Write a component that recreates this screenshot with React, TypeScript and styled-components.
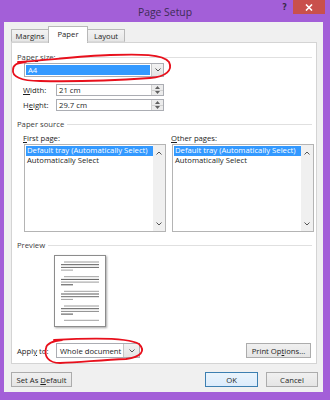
import styled, { createGlobalStyle } from 'styled-components';

// -----------------------------------------------------------------------------

const GlobalStyle = createGlobalStyle`
	body {
		margin: 0;
		font-family: "Open Sans", "Noto Sans", sans-serif;
		font-size: 7.7px;
		color: #1e1e1e;
	}
`;

const pageLines = [
	{ y: 7, x1: 10, x2: 45, c: '#9a9a9a' },
	{ y: 9.7, x1: 7, x2: 45, c: '#5a5a5a' },
	{ y: 12.4, x1: 7, x2: 45, c: '#6a6a6a' },
	{ y: 15.1, x1: 7, x2: 19, c: '#a0a0a0' },
	{ y: 21.7, x1: 10, x2: 45, c: '#a0a0a0' },
	{ y: 24.4, x1: 7, x2: 45, c: '#5a5a5a' },
	{ y: 27.1, x1: 7, x2: 45, c: '#9a9a9a' },
	{ y: 29.8, x1: 7, x2: 19, c: '#4a4a4a' },
	{ y: 36.3, x1: 10, x2: 45, c: '#a0a0a0' },
	{ y: 39, x1: 7, x2: 45, c: '#5a5a5a' },
	{ y: 41.7, x1: 7, x2: 45, c: '#6a6a6a' },
	{ y: 44.4, x1: 7, x2: 19, c: '#a0a0a0' },
	{ y: 51, x1: 10, x2: 45, c: '#9a9a9a' },
	{ y: 53.7, x1: 7, x2: 45, c: '#5a5a5a' },
	{ y: 56.4, x1: 7, x2: 45, c: '#8a8a8a' },
	{ y: 59.1, x1: 7, x2: 19, c: '#4a4a4a' },
	{ y: 65.3, x1: 10, x2: 45, c: '#a0a0a0' },
];

function Chevron({ up = false }: { up?: boolean }): JSX.Element {
	return (
		<svg width="6" height="4" viewBox="0 0 6 4">
			<path
				d={up ? 'M0.5 3.5 L3 1 L5.5 3.5' : 'M0.5 0.5 L3 3 L5.5 0.5'}
				fill="none"
				stroke="#555"
				strokeWidth="1"
			/>
		</svg>
	);
}

function Spinner(): JSX.Element {
	return (
		<SpinBox>
			<SpinHalf>
				<svg width="5" height="3" viewBox="0 0 5 3">
					<path d="M0 3 L2.5 0 L5 3 Z" fill="#606060" />
				</svg>
			</SpinHalf>
			<SpinHalf>
				<svg width="5" height="3" viewBox="0 0 5 3">
					<path d="M0 0 L2.5 3 L5 0 Z" fill="#606060" />
				</svg>
			</SpinHalf>
		</SpinBox>
	);
}

function SourceList({ label }: { label: JSX.Element }): JSX.Element {
	return (
		<SourceColumn>
			<ListLabel>{label}</ListLabel>
			<ListBox>
				<ListItems>
					<ListItem $selected>Default tray (Automatically Select)</ListItem>
					<ListItem>Automatically Select</ListItem>
				</ListItems>
				<ScrollTrack>
					<Chevron up />
					<Chevron />
				</ScrollTrack>
			</ListBox>
		</SourceColumn>
	);
}

// -----------------------------------------------------------------------------

export default function App(): JSX.Element {
	return (
		<>
			<GlobalStyle />
			<Window>
				<TitleBar>
					<span />
					<Title>Page Setup</Title>
					<TitleControls>
						<HelpMark>?</HelpMark>
						<CloseButton>
							<svg width="8" height="7" viewBox="0 0 8 7">
								<path d="M1 0.5 L7 6.5 M7 0.5 L1 6.5" stroke="#fff" strokeWidth="1.6" />
							</svg>
						</CloseButton>
					</TitleControls>
				</TitleBar>

				<Body>
					<TabRow>
						<Tab>Margins</Tab>
						<Tab $active>Paper</Tab>
						<Tab>Layout</Tab>
					</TabRow>

					<Panel>
						<Heading>
							<span>
								Pape<u>r</u> size:
							</span>
							<Rule />
						</Heading>

						<PaperCombo>
							<ComboField $selected>A4</ComboField>
							<ComboArrow>
								<Chevron />
							</ComboArrow>
						</PaperCombo>

						<SizeRow $top={7}>
							<SizeLabel>
								<u>W</u>idth:
							</SizeLabel>
							<SpinInput>
								<SpinValue>21 cm</SpinValue>
								<Spinner />
							</SpinInput>
						</SizeRow>
						<SizeRow $top={3}>
							<SizeLabel>
								H<u>e</u>ight:
							</SizeLabel>
							<SpinInput>
								<SpinValue>29.7 cm</SpinValue>
								<Spinner />
							</SpinInput>
						</SizeRow>

						<Heading $top={8}>
							<span>Paper source</span>
							<Rule />
						</Heading>

						<SourceColumns>
							<SourceList
								label={
									<span>
										<u>F</u>irst page:
									</span>
								}
							/>
							<SourceList
								label={
									<span>
										<u>O</u>ther pages:
									</span>
								}
							/>
						</SourceColumns>

						<Heading $top={8}>
							<span>Preview</span>
							<Rule />
						</Heading>

						<PreviewPage>
							<svg width="52" height="72" viewBox="0 0 52 72">
								{pageLines.map((l, i) => (
									<line
										key={i}
										x1={l.x1}
										x2={l.x2}
										y1={l.y}
										y2={l.y}
										stroke={l.c}
										strokeWidth="1"
									/>
								))}
							</svg>
						</PreviewPage>

						<ApplyRow>
							<ApplyLabel>
								Appl<u>y</u> to:
							</ApplyLabel>
							<ApplyCombo>
								<ComboField>Whole document</ComboField>
								<ComboArrow $wide>
									<Chevron />
								</ComboArrow>
							</ApplyCombo>
							<Spacer />
							<Button $width={65}>
								<span>
									Print Op<u>t</u>ions...
								</span>
							</Button>
						</ApplyRow>
					</Panel>

					<ButtonRow>
						<Button $width={61}>
							<span>
								Set As <u>D</u>efault
							</span>
						</Button>
						<Spacer />
						<Button $width={53} $default>
							OK
						</Button>
						<Button $width={52}>Cancel</Button>
					</ButtonRow>
				</Body>

				<Scribble viewBox="0 0 330 400" width="330" height="400">
					<path
						d="M18 62 C40 61 80 56 110 55 C140 54 163 54 169 62 C173 70 166 77 150 78 C120 80 80 82 40 81 C20 81 12 76 13 70 C13 65 16 63 26 62"
						fill="none"
						stroke="#e8101c"
						strokeWidth="1.8"
						strokeLinecap="round"
					/>
					<path
						d="M54 340 C88 338 128 337 139 344 C146 351 141 357 126 359 C102 360 82 362 60 363 C48 363 44 356 46 348 C47 343 52 341 62 340"
						fill="none"
						stroke="#e8101c"
						strokeWidth="1.8"
						strokeLinecap="round"
					/>
				</Scribble>
			</Window>
		</>
	);
}

// -----------------------------------------------------------------------------

const Window = styled.div`
	position: relative;
	display: flex;
	flex-direction: column;
	width: 330px;
	height: 400px;
	background: #a35fd8;
	overflow: hidden;
`;

const TitleBar = styled.div`
	display: grid;
	grid-template-columns: 1fr auto 1fr;
	height: 22px;
	flex-shrink: 0;
`;

const Title = styled.div`
	align-self: center;
	font-size: 10.4px;
	color: #3d2b55;
	padding-top: 1px;
`;

const TitleControls = styled.div`
	display: flex;
	justify-content: flex-end;
	align-items: flex-start;
	padding-right: 5px;
`;

const HelpMark = styled.span`
	font-family: "DejaVu Sans", sans-serif;
	font-weight: bold;
	font-size: 8px;
	color: #3a2a4a;
	margin: 3px 6px 0 0;
`;

const CloseButton = styled.div`
	display: flex;
	align-items: center;
	justify-content: center;
	width: 32px;
	height: 14px;
	background: #c9504c;
`;

const Body = styled.div`
	display: flex;
	flex-direction: column;
	flex: 1;
	margin: 0 7px 8px 4px;
	padding: 4px 6px 5px 7px;
	background: #f0f0f0;
`;

const TabRow = styled.div`
	display: flex;
	align-items: flex-end;
	height: 16px;
	position: relative;
	z-index: 1;
`;

const Tab = styled.div<{ $active?: boolean }>`
	display: flex;
	align-items: center;
	justify-content: center;
	box-sizing: border-box;
	width: ${(p) => (p.$active ? 40 : 38)}px;
	height: ${(p) => (p.$active ? 17 : 13)}px;
	margin-bottom: ${(p) => (p.$active ? -1 : 0)}px;
	margin-left: ${(p) => (p.$active ? -1 : 0)}px;
	margin-right: ${(p) => (p.$active ? -1 : 0)}px;
	border: 1px solid #b8b8b8;
	border-bottom: ${(p) => (p.$active ? 'none' : '1px solid #d9d9d9')};
	background: ${(p) => (p.$active ? '#fff' : 'linear-gradient(#f3f3f3, #e6e6e6)')};
	padding-bottom: ${(p) => (p.$active ? 2 : 0)}px;
`;

const Panel = styled.div`
	display: flex;
	flex-direction: column;
	box-sizing: border-box;
	height: 322px;
	padding: 9px 4px 0 5px;
	background: #fff;
	border: 1px solid #d4d4d4;
`;

const Heading = styled.div<{ $top?: number }>`
	display: flex;
	align-items: center;
	gap: 3px;
	height: 10px;
	margin-top: ${(p) => p.$top ?? 0}px;
	color: #3c3c3c;
	white-space: nowrap;
`;

const Rule = styled.div`
	flex: 1;
	height: 1px;
	background: #e0e0e0;
`;

const PaperCombo = styled.div`
	display: flex;
	box-sizing: border-box;
	width: 140px;
	height: 14px;
	margin: 1px 0 0 7px;
	border: 1px solid #abadb3;
	background: #fff;
`;

const ApplyCombo = styled(PaperCombo)`
	width: 84px;
	height: 15px;
	margin: 0 0 0 7px;
`;

const ComboField = styled.div<{ $selected?: boolean }>`
	flex: 1;
	display: flex;
	align-items: center;
	margin: 1px;
	padding-left: 2px;
	background: ${(p) => (p.$selected ? '#3399ff' : 'transparent')};
	color: ${(p) => (p.$selected ? '#fff' : '#1e1e1e')};
`;

const ComboArrow = styled.div<{ $wide?: boolean }>`
	display: flex;
	align-items: center;
	justify-content: center;
	width: ${(p) => (p.$wide ? 15 : 11)}px;
	border-left: 1px solid #c6c6c6;
	background: linear-gradient(#f2f2f2, #e4e4e4);
`;

const SizeRow = styled.div<{ $top: number }>`
	display: flex;
	align-items: center;
	height: 12px;
	margin: ${(p) => p.$top}px 0 0 6px;
`;

const SizeLabel = styled.div`
	width: 33px;
`;

const SpinInput = styled.div`
	display: flex;
	box-sizing: border-box;
	width: 108px;
	height: 12px;
	border: 1px solid #abadb3;
	background: #fff;
`;

const SpinValue = styled.div`
	flex: 1;
	display: flex;
	align-items: center;
	padding-left: 2px;
`;

const SpinBox = styled.div`
	display: flex;
	flex-direction: column;
	width: 11px;
	border-left: 1px solid #d0d0d0;
`;

const SpinHalf = styled.div`
	flex: 1;
	display: flex;
	align-items: center;
	justify-content: center;
	background: #ececec;

	& + & {
		border-top: 1px solid #d0d0d0;
	}
`;

const SourceColumns = styled.div`
	display: grid;
	grid-template-columns: 142px 142px;
	gap: 6px;
	margin: 4px 0 0 7px;
`;

const SourceColumn = styled.div`
	display: flex;
	flex-direction: column;
`;

const ListLabel = styled.div`
	height: 10px;
	margin-left: -1px;
	display: flex;
	align-items: center;
`;

const ListBox = styled.div`
	display: flex;
	box-sizing: border-box;
	height: 88px;
	margin-top: 1px;
	border: 1px solid #b4b4b4;
	background: #fff;
`;

const ListItems = styled.div`
	flex: 1;
	padding: 1px 0 0 1px;
`;

const ListItem = styled.div<{ $selected?: boolean }>`
	height: 9.5px;
	line-height: 9.5px;
	padding-left: 1px;
	white-space: nowrap;
	background: ${(p) => (p.$selected ? '#3399ff' : 'transparent')};
	color: ${(p) => (p.$selected ? '#fff' : '#1e1e1e')};
`;

const ScrollTrack = styled.div`
	display: flex;
	flex-direction: column;
	align-items: center;
	justify-content: space-between;
	width: 12px;
	padding: 6px 0 5px;
	background: #f0f0f0;
`;

const PreviewPage = styled.div`
	box-sizing: border-box;
	width: 52px;
	height: 72px;
	margin: 5px 0 0 37px;
	background: #fff;
	border: 1px solid #8c8c8c;
	box-shadow: 1px 1px 2px rgba(0, 0, 0, 0.35);

	svg {
		display: block;
		margin: -1px;
	}
`;

const ApplyRow = styled.div`
	display: flex;
	align-items: center;
	margin-top: 16px;
	padding-right: 1px;
`;

const ApplyLabel = styled.div`
	width: 32px;
	white-space: nowrap;
`;

const Spacer = styled.div`
	flex: 1;
`;

const Button = styled.div<{ $width: number; $default?: boolean }>`
	display: flex;
	align-items: center;
	justify-content: center;
	box-sizing: border-box;
	width: ${(p) => p.$width}px;
	height: 15px;
	border: 1px solid ${(p) => (p.$default ? '#3c7fb1' : '#acacac')};
	background: ${(p) =>
		p.$default ? 'linear-gradient(#eaf4fc, #dcecfc)' : 'linear-gradient(#f0f0f0, #e5e5e5)'};
	white-space: nowrap;
`;

const ButtonRow = styled.div`
	display: flex;
	gap: 8px;
	margin-top: 8px;
	margin-right: -1px;
`;

const Scribble = styled.svg`
	position: absolute;
	top: 0;
	left: 0;
	pointer-events: none;
`;
